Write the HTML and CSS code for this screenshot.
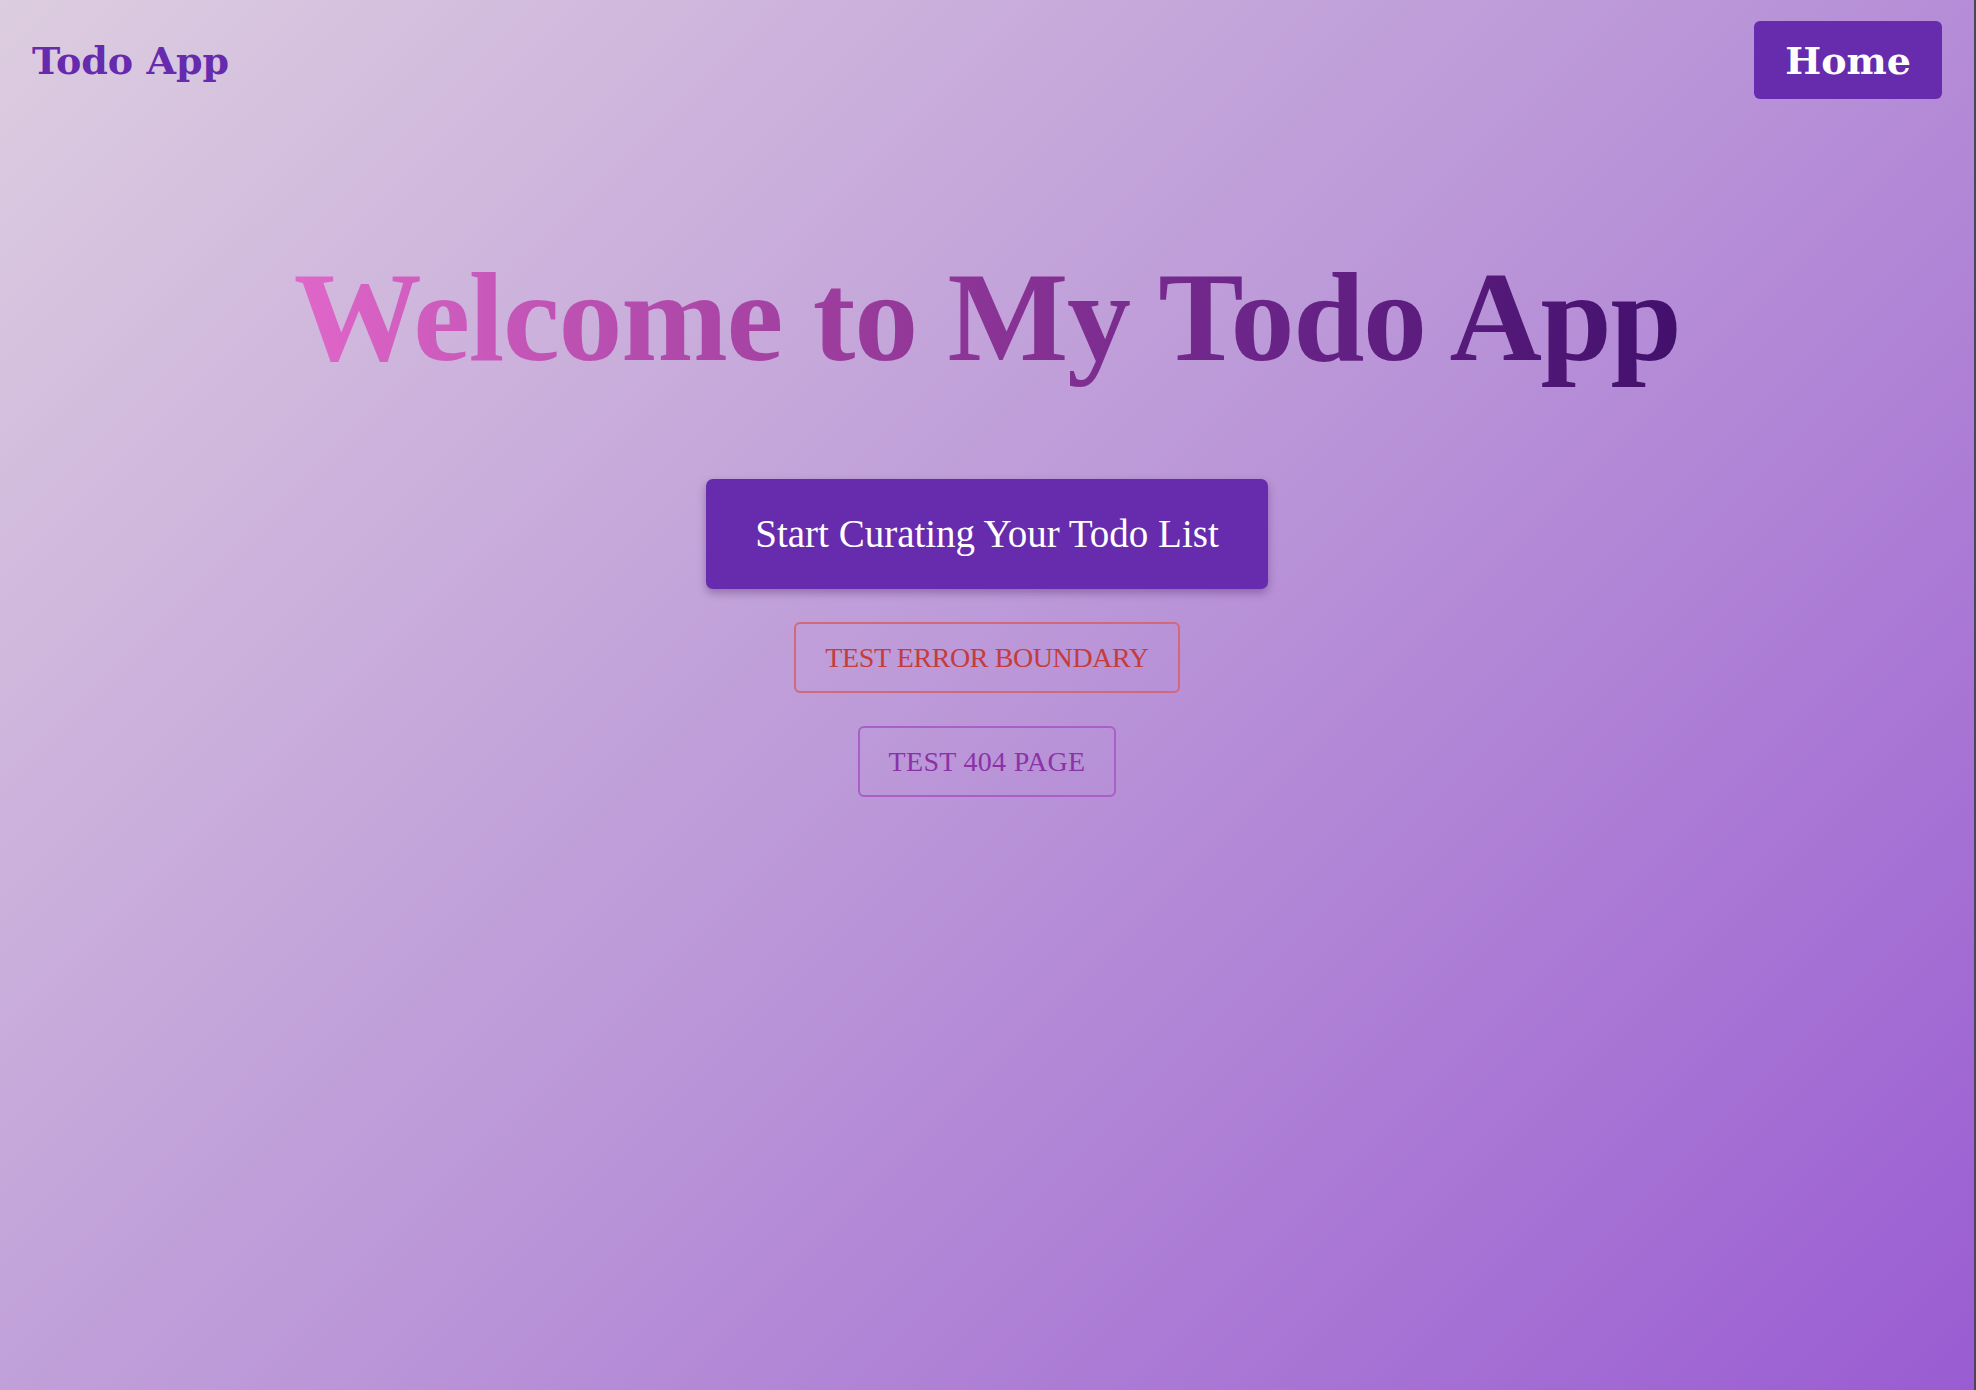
FILE: index.html
```html
<!DOCTYPE html>
<html lang="en">
<head>
<meta charset="utf-8">
<title>Todo App</title>
<link rel="stylesheet" href="styles.css">
</head>
<body>
<div class="page">
  <header class="topbar">
    <a class="brand" href="#">Todo App</a>
    <nav class="nav">
      <a class="nav-btn" href="#">Home</a>
    </nav>
  </header>
  <main class="hero">
    <h1 class="title">Welcome to My Todo App</h1>
    <div class="actions">
      <button class="cta" type="button">Start Curating Your Todo List</button>
      <button class="outline danger" type="button">Test Error Boundary</button>
      <button class="outline secondary" type="button">Test 404 Page</button>
    </div>
  </main>
</div>
</body>
</html>
```

FILE: styles.css
```css
* { box-sizing: border-box; }
html, body { margin: 0; padding: 0; height: 100%; }
body {
  font-family: "Liberation Serif", "DejaVu Serif", serif;
  background: #9b5fd2;
}
.page {
  min-height: 100vh;
  width: 100%;
  border-right: 2px solid #4b4557;
  background: linear-gradient(135deg, #ddcde0 0%, #bb97d8 50%, #9a5cd2 100%);
}
.topbar {
  height: 120px;
  padding: 0 32px;
  display: flex;
  align-items: center;
  justify-content: space-between;
}
.brand {
  font-family: "DejaVu Serif", serif;
  font-weight: bold;
  font-size: 38px;
  color: #662aae;
  text-decoration: none;
}
.nav-btn {
  display: flex;
  align-items: center;
  height: 78px;
  padding: 0 31px;
  font-family: "DejaVu Serif", serif;
  font-weight: bold;
  font-size: 38px;
  color: #ffffff;
  background: #672bad;
  border-radius: 6px;
  text-decoration: none;
}
.hero {
  display: flex;
  flex-direction: column;
  align-items: center;
}
.title {
  margin: 120px 0 0;
  font-family: "Liberation Serif", serif;
  font-weight: bold;
  font-size: 128px;
  line-height: 154px;
  letter-spacing: -1.3px;
  background: linear-gradient(90deg, #e067c9 0%, #9a3c9c 40%, #6a2488 70%, #42106c 100%);
  -webkit-background-clip: text;
  background-clip: text;
  color: transparent;
}
.actions {
  margin-top: 85px;
  display: flex;
  flex-direction: column;
  align-items: center;
  gap: 33px;
}
.cta {
  font-family: "Liberation Serif", serif;
  font-size: 39px;
  line-height: 46px;
  padding: 32px 49px;
  color: #ffffff;
  background: #672bad;
  border: none;
  border-radius: 7px;
  box-shadow: 0 4px 8px rgba(60, 20, 90, 0.35);
}
.outline {
  font-family: "Liberation Serif", serif;
  font-size: 28px;
  line-height: 39px;
  letter-spacing: -0.4px;
  text-transform: uppercase;
  padding: 14px 29px;
  background: transparent;
  border-radius: 6px;
  border: 2px solid;
}
.danger {
  color: #c43c3c;
  border-color: #d2687a;
}
.secondary {
  letter-spacing: 0.3px;
  color: #8c32a8;
  border-color: #a95ec8;
}
```
